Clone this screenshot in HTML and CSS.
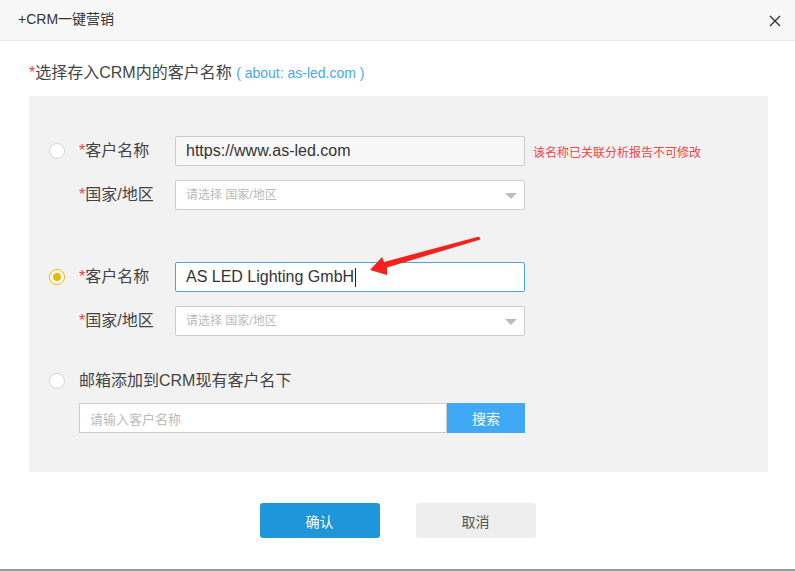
FILE: index.html
```html
<!DOCTYPE html>
<html lang="zh-CN">
<head>
<meta charset="utf-8">
<title>+CRM一键营销</title>
<link rel="stylesheet" href="styles.css">
</head>
<body>
<div class="dialog">
  <div class="header">
    <span class="title">+CRM一键营销</span>
    <svg class="close" width="12" height="12" viewBox="0 0 12 12"><path d="M1 1 L11 11 M11 1 L1 11" stroke="#333" stroke-width="1.4" fill="none"/></svg>
  </div>
  <div class="content">
    <div class="subtitle"><span class="req">*</span>选择存入CRM内的客户名称 <span class="about">( about: as-led.com )</span></div>
    <div class="panel">
      <div class="group">
        <div class="row">
          <span class="radio"></span>
          <span class="label"><span class="req">*</span>客户名称</span>
          <div class="field readonly">https://www.as-led.com</div>
          <span class="err">该名称已关联分析报告不可修改</span>
        </div>
        <div class="row gap">
          <span class="radio-space"></span>
          <span class="label"><span class="req">*</span>国家/地区</span>
          <div class="field select"><span class="ph">请选择 国家/地区</span><span class="tri"></span></div>
        </div>
      </div>
      <div class="group second">
        <div class="row">
          <span class="radio checked"></span>
          <span class="label"><span class="req">*</span>客户名称</span>
          <div class="field focus">AS LED Lighting GmbH<span class="caret"></span></div>
        </div>
        <div class="row gap">
          <span class="radio-space"></span>
          <span class="label"><span class="req">*</span>国家/地区</span>
          <div class="field select"><span class="ph">请选择 国家/地区</span><span class="tri"></span></div>
        </div>
      </div>
      <div class="group third">
        <div class="row">
          <span class="radio"></span>
          <span class="label wide">邮箱添加到CRM现有客户名下</span>
        </div>
        <div class="row search-row">
          <span class="radio-space"></span>
          <div class="search-input"><span class="ph ph13">请输入客户名称</span></div>
          <button class="search-btn">搜索</button>
        </div>
      </div>
    </div>
    <div class="actions">
      <button class="btn primary">确认</button>
      <button class="btn cancel">取消</button>
    </div>
  </div>
  <svg class="arrow" width="795" height="571" viewBox="0 0 795 571">
    <polygon points="370,270 382,257 384,262 479,236.5 480.5,239.5 387,267.5 387,275" fill="#f2231d"/>
  </svg>
</div>
</body>
</html>
```

FILE: styles.css
```css
* { box-sizing: border-box; }
html, body { margin: 0; padding: 0; background: #fff; }
body {
  font-family: "Liberation Sans", "Noto Sans CJK SC", sans-serif;
  color: #333;
}
.dialog {
  position: relative;
  width: 795px;
  height: 571px;
  border-bottom: 2px solid #999;
  overflow: hidden;
}
.header {
  height: 41px;
  background: #f7f7f7;
  border-bottom: 1px solid #e8e8e8;
  display: flex;
  align-items: center;
  justify-content: space-between;
  padding: 0 14px 0 18px;
}
.title {
  font-size: 14px;
  line-height: 20px;
  color: #333;
  margin-top: -2px;
}
.close { display: block; margin-top: 1px; }
.content {
  padding: 21px 27px 0 29px;
}
.subtitle {
  font-size: 16px;
  line-height: 22px;
  color: #444;
  margin-bottom: 12px;
}
.req { color: #e84343; }
.about { color: #4aa8ec; font-size: 14px; }
.panel {
  background: #f2f2f2;
  padding: 40px 0 39px 20px;
}
.group.second { margin-top: 52px; }
.group.third { margin-top: 30px; }
.row {
  display: flex;
  align-items: center;
  height: 30px;
}
.row.gap { margin-top: 14px; }
.row.search-row { margin-top: 7px; }
.radio, .radio-space {
  width: 16px;
  height: 16px;
  margin-right: 14px;
  flex: none;
}
.radio {
  border-radius: 50%;
  background: #fff;
  border: 1px solid #d6d6d6;
  position: relative;
}
.radio.checked {
  border: 1.5px solid #f2b600;
  display: flex;
  align-items: center;
  justify-content: center;
}
.radio.checked::after {
  content: "";
  width: 8px;
  height: 8px;
  border-radius: 50%;
  background: #f2b600;
}
.label {
  width: 96px;
  flex: none;
  font-size: 16px;
  line-height: 22px;
  color: #444;
}
.label.wide { width: auto; }
.field {
  width: 350px;
  height: 30px;
  border: 1px solid #cccccc;
  border-radius: 2px;
  background: #fff;
  font-size: 16px;
  line-height: 28px;
  padding: 0 10px;
  color: #333;
  display: flex;
  align-items: center;
}
.field.readonly { background: #f7f7f7; }
.field.focus { border-color: #4aa3e8; }
.caret {
  display: inline-block;
  width: 1px;
  height: 19px;
  background: #222;
  margin-left: 1px;
}
.field.select {
  justify-content: space-between;
  padding-right: 7px;
}
.ph { font-size: 12px; color: #bbbbbb; }
.ph13 { font-size: 13px; }
.tri {
  width: 0;
  height: 0;
  border-left: 6px solid transparent;
  border-right: 6px solid transparent;
  border-top: 6px solid #bdbdbd;
  margin-top: 2px;
}
.err {
  margin-left: 8px;
  font-size: 12px;
  color: #ee4646;
}
.search-input {
  width: 368px;
  height: 30px;
  border: 1px solid #cccccc;
  background: #fff;
  display: flex;
  align-items: center;
  padding-left: 10px;
}
.search-btn {
  width: 78px;
  height: 30px;
  border: none;
  background: #3fa9f5;
  color: #fff;
  font-family: inherit;
  font-size: 14px;
  padding: 0;
}
.actions {
  display: flex;
  justify-content: center;
  gap: 36px;
  margin-top: 31px;
  margin-left: -2px;
}
.btn {
  width: 120px;
  height: 35px;
  border: none;
  border-radius: 3px;
  font-family: inherit;
  font-size: 14px;
  padding: 0;
}
.btn.primary { background: #1e96d9; color: #fff; }
.btn.cancel { background: #eeeeee; color: #555; }
.arrow {
  position: absolute;
  left: 0;
  top: 0;
  pointer-events: none;
}
```
